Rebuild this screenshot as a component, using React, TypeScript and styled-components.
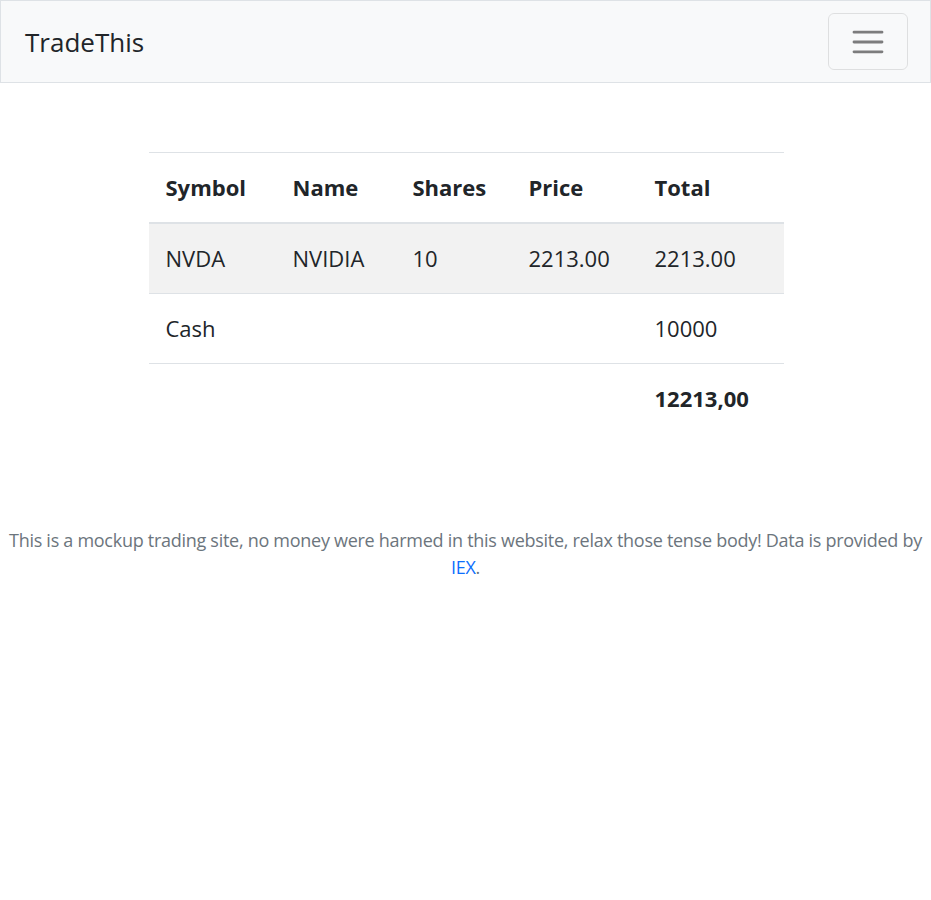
import { createGlobalStyle, styled } from "styled-components";

type Holding = {
  symbol: string;
  name: string;
  shares: number;
  price: string;
  total: string;
};

const holdings: Holding[] = [
  { symbol: "NVDA", name: "NVIDIA", shares: 10, price: "2213.00", total: "2213.00" },
];

const GlobalStyle = createGlobalStyle`
  body {
    margin: 0;
    font-family: "Open Sans", "Noto Sans", "Liberation Sans", sans-serif;
    color: #212529;
    background: #fff;
  }
`;

export default function App() {
  return (
    <>
      <GlobalStyle />
      <Navbar>
        <Brand href="#">TradeThis</Brand>
        <Toggler type="button" aria-label="Toggle navigation">
          <svg width="42" height="42" viewBox="0 0 30 30">
            <path
              d="M5 8h20M5 15h20M5 22h20"
              stroke="rgba(0,0,0,0.5)"
              strokeWidth="2"
              strokeLinecap="round"
            />
          </svg>
        </Toggler>
      </Navbar>

      <Main>
        <Table>
          <colgroup>
            <col style={{ width: 127 }} />
            <col style={{ width: 120 }} />
            <col style={{ width: 116 }} />
            <col style={{ width: 126 }} />
            <col style={{ width: 146 }} />
          </colgroup>
          <thead>
            <tr>
              <Th>Symbol</Th>
              <Th>Name</Th>
              <Th>Shares</Th>
              <Th>Price</Th>
              <Th>Total</Th>
            </tr>
          </thead>
          <tbody>
            {holdings.map((h) => (
              <Row key={h.symbol} $striped>
                <Td>{h.symbol}</Td>
                <Td>{h.name}</Td>
                <Td>{h.shares}</Td>
                <Td>{h.price}</Td>
                <Td>{h.total}</Td>
              </Row>
            ))}
            <Row>
              <Td>Cash</Td>
              <Td />
              <Td />
              <Td />
              <Td>10000</Td>
            </Row>
          </tbody>
          <tfoot>
            <Row>
              <Td />
              <Td />
              <Td />
              <Td />
              <Td $bold>12213,00</Td>
            </Row>
          </tfoot>
        </Table>
      </Main>

      <Footer>
        This is a mockup trading site, no money were harmed in this website, relax
        those tense body! Data is provided by <FooterLink href="#">IEX</FooterLink>.
      </Footer>
    </>
  );
}

const Navbar = styled.nav`
  display: flex;
  align-items: center;
  justify-content: space-between;
  height: 83px;
  box-sizing: border-box;
  padding: 0 22px;
  background: #f8f9fa;
  border: 1px solid #dee2e6;
`;

const Brand = styled.a`
  font-size: 26px;
  line-height: 1.5;
  color: #212529;
  text-decoration: none;
  padding-left: 2px;
  margin-top: 2px;
`;

const Toggler = styled.button`
  display: flex;
  align-items: center;
  justify-content: center;
  width: 80px;
  height: 57px;
  padding: 0;
  background: transparent;
  border: 1px solid rgba(0, 0, 0, 0.1);
  border-radius: 6px;
`;

const Main = styled.main`
  display: flex;
  justify-content: center;
  padding: 69px 0 0 1px;
`;

const Table = styled.table`
  width: 635px;
  border-collapse: collapse;
  table-layout: fixed;
  font-size: 22px;
`;

const Th = styled.th`
  text-align: left;
  font-weight: 700;
  padding: 18px 17px;
  line-height: 33px;
  border-top: 1px solid #dee2e6;
  border-bottom: 2px solid #dee2e6;
`;

const Row = styled.tr<{ $striped?: boolean }>`
  background: ${(p) => (p.$striped ? "#f2f2f2" : "transparent")};
`;

const Td = styled.td<{ $bold?: boolean }>`
  padding: 18px 17px;
  line-height: 33px;
  font-weight: ${(p) => (p.$bold ? 700 : 400)};
  border-top: 1px solid #dee2e6;
`;

const Footer = styled.footer`
  margin-top: 94px;
  text-align: center;
  font-size: 18px;
  letter-spacing: -0.28px;
  line-height: 27px;
  color: #6c757d;
`;

const FooterLink = styled.a`
  color: #0d6efd;
  text-decoration: none;
`;
